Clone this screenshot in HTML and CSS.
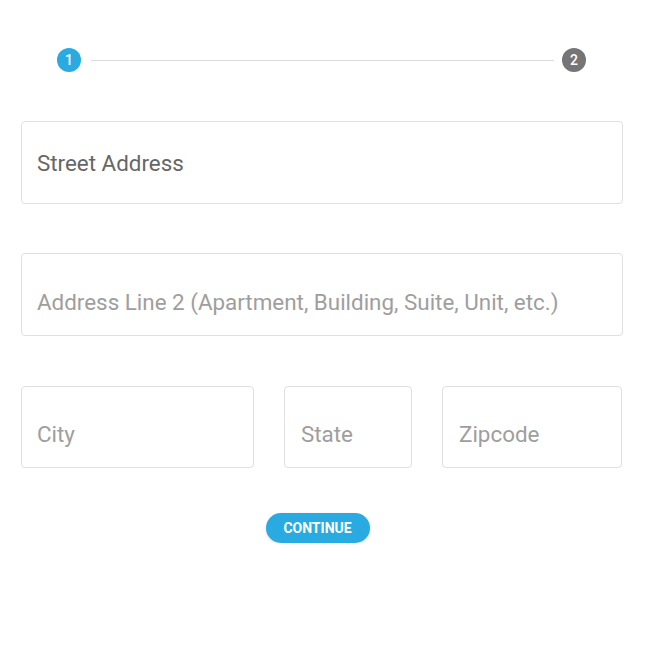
FILE: index.html
```html
<!DOCTYPE html>
<html>
<head>
<meta charset="utf-8">
<link rel="stylesheet" href="styles.css">
</head>
<body>
<div class="page">
  <div class="stepper">
    <span class="step active">1</span>
    <span class="line"></span>
    <span class="step">2</span>
  </div>
  <form class="form">
    <div class="field value"><span>Street Address</span></div>
    <div class="field"><span>Address Line 2 (Apartment, Building, Suite, Unit, etc.)</span></div>
    <div class="row">
      <div class="field city"><span>City</span></div>
      <div class="field state"><span>State</span></div>
      <div class="field zip"><span>Zipcode</span></div>
    </div>
    <div class="actions">
      <button type="button" class="btn">CONTINUE</button>
    </div>
  </form>
</div>
</body>
</html>
```
FILE: styles.css
```css
* { box-sizing: border-box; }
html, body { margin: 0; padding: 0; background: #fff; }
body { font-family: Roboto, "Noto Sans", sans-serif; }
.page { padding: 48px 23px 0 21px; }
.stepper {
  display: flex;
  align-items: center;
  padding: 0 37px 0 36px;
  height: 24px;
}
.step {
  width: 24px; height: 24px; border-radius: 50%;
  background: #757575; color: #fff;
  font-size: 14px; font-weight: 500;
  display: flex; align-items: center; justify-content: center;
  flex: none;
}
.step.active { background: #29abe2; }
.line { flex: 1; height: 1px; background: #dcdcdc; margin: 0 8px 0 10px; }
.form { margin-top: 49px; display: flex; flex-direction: column; gap: 49px; }
.field {
  height: 83px;
  border: 1px solid #e0e0e0;
  border-radius: 4px;
  padding: 14px 15px 0 15px;
  display: flex; align-items: center;
  font-size: 22.4px;
  color: #9e9e9e;
}
.field.value { color: #666; padding-top: 0; }
.row { display: flex; gap: 30px; margin-top: 1px; }
.city { width: 233px; }
.state { width: 128px; padding-left: 16px; }
.zip { width: 180px; padding-left: 16px; }
.row .field { height: 82px; }
.actions { display: flex; justify-content: center; margin-top: -4px; padding-right: 9px; }
.btn {
  width: 104px; height: 30px; border: none; border-radius: 15px;
  background: #29abe2; color: #fff;
  font-family: Roboto, sans-serif; font-weight: 700; font-size: 14px;
  box-shadow: 0 1px 3px rgba(0,0,0,0.15);
  padding: 0;
}
```
